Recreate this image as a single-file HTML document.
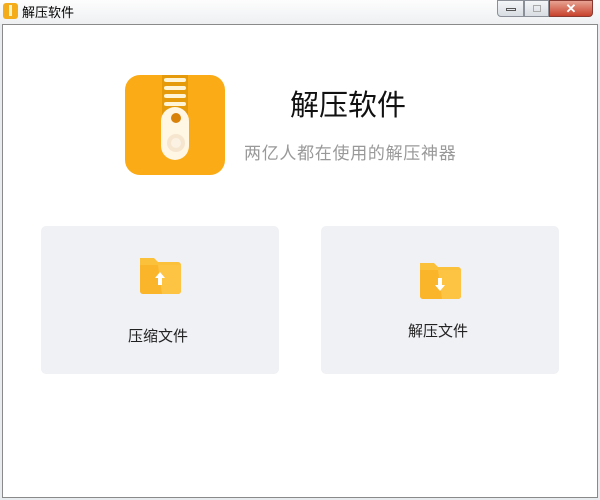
<!DOCTYPE html>
<html><head><meta charset="utf-8"><style>
*{margin:0;padding:0;box-sizing:border-box}
body{width:600px;height:500px;overflow:hidden;background:#e9ecef;font-family:"Liberation Sans","Noto Sans CJK SC",sans-serif;position:relative}
.tb{position:absolute;left:0;top:0;width:600px;height:24px;background:linear-gradient(#fdfdfd,#eef0f2)}
.tt{position:absolute;left:22px;top:2px;font-size:13px;color:#000}
.win{position:absolute;left:2px;top:24px;width:596px;height:474px;background:#fff;border:1px solid #8a8a8a}
.btn{position:absolute;top:0;height:17px;border:1px solid #8a8f98;background:linear-gradient(#f4f6f8,#d8dde3)}
.card{position:absolute;top:226px;width:238px;height:148px;background:#f0f1f5;border-radius:5px}
.lab{position:absolute;font-size:15px;color:#222}
</style></head><body>
<div class="tb">
<div style="position:absolute;left:3px;top:3px;width:15px;height:16px;background:#f5ac1b;border-radius:3px"><div style="position:absolute;left:6px;top:2px;width:3px;height:11px;background:#fff3c4"></div></div>
<div class="tt">解压软件</div>
<div class="btn" style="left:497px;width:27px;border-radius:0 0 0 4px"><div style="position:absolute;left:8px;top:7px;width:10px;height:3px;border:1px solid #555"></div></div>
<div class="btn" style="left:524px;width:25px"><div style="position:absolute;left:8px;top:4px;width:8px;height:7px;border:1px solid #aaa"></div></div>
<div class="btn" style="left:549px;width:44px;background:linear-gradient(#e8a393,#c7412c);border-color:#8a3a30;border-radius:0 0 4px 0;color:#fff;font-size:13px;font-weight:bold;text-align:center;line-height:15px">✕</div>
</div>
<div class="win"></div>
<svg style="position:absolute;left:125px;top:75px" width="100" height="100">
<rect width="100" height="100" rx="15" fill="#fbab16"/>
<rect x="37" y="0" width="26" height="40" fill="#e59a0c"/>
<rect x="39" y="3" width="22" height="4" rx="2" fill="#fff4d6"/>
<rect x="39" y="11" width="22" height="4" rx="2" fill="#fff4d6"/>
<rect x="39" y="19" width="22" height="4" rx="2" fill="#fff4d6"/>
<rect x="39" y="27" width="22" height="4" rx="2" fill="#fff4d6"/>
<rect x="36" y="32" width="28" height="53" rx="14" fill="#fff6e4"/>
<circle cx="51" cy="43" r="5" fill="#d98209"/>
<circle cx="51" cy="68" r="9" fill="#f6e6cf"/><circle cx="51" cy="68" r="5" fill="#fbf2e4"/>
</svg>
<div style="position:absolute;left:290px;top:82px;font-size:29px;color:#111">解压软件</div>
<div style="position:absolute;left:244px;top:139px;font-size:17px;letter-spacing:0.7px;color:#999">两亿人都在使用的解压神器</div>
<div class="card" style="left:41px"></div>
<div class="card" style="left:321px"></div>
<svg style="position:absolute;left:138px;top:256px" width="45" height="40">
<path d="M2 2h14l4 4h20a3 3 0 0 1 3 3v26a3 3 0 0 1-3 3H5a3 3 0 0 1-3-3z" fill="#fcc13a"/>
<path d="M2 9h41v26a3 3 0 0 1-3 3H5a3 3 0 0 1-3-3z" fill="#fbb52a"/>
<path d="M20 9h23v26a3 3 0 0 1-3 3H24z" fill="#fdc94e" opacity=".7"/>
<path d="M22 16l-5 6h3v7h4v-7h3z" fill="#fff"/>
</svg>
<svg style="position:absolute;left:418px;top:261px" width="45" height="40">
<path d="M2 2h14l4 4h20a3 3 0 0 1 3 3v26a3 3 0 0 1-3 3H5a3 3 0 0 1-3-3z" fill="#fcc13a"/>
<path d="M2 9h41v26a3 3 0 0 1-3 3H5a3 3 0 0 1-3-3z" fill="#fbb52a"/>
<path d="M20 9h23v26a3 3 0 0 1-3 3H24z" fill="#fdc94e" opacity=".7"/>
<path d="M22 30l-5-6h3v-7h4v7h3z" fill="#fff"/>
</svg>
<div class="lab" style="left:128px;top:325px">压缩文件</div>
<div class="lab" style="left:408px;top:320px">解压文件</div>
</body></html>
